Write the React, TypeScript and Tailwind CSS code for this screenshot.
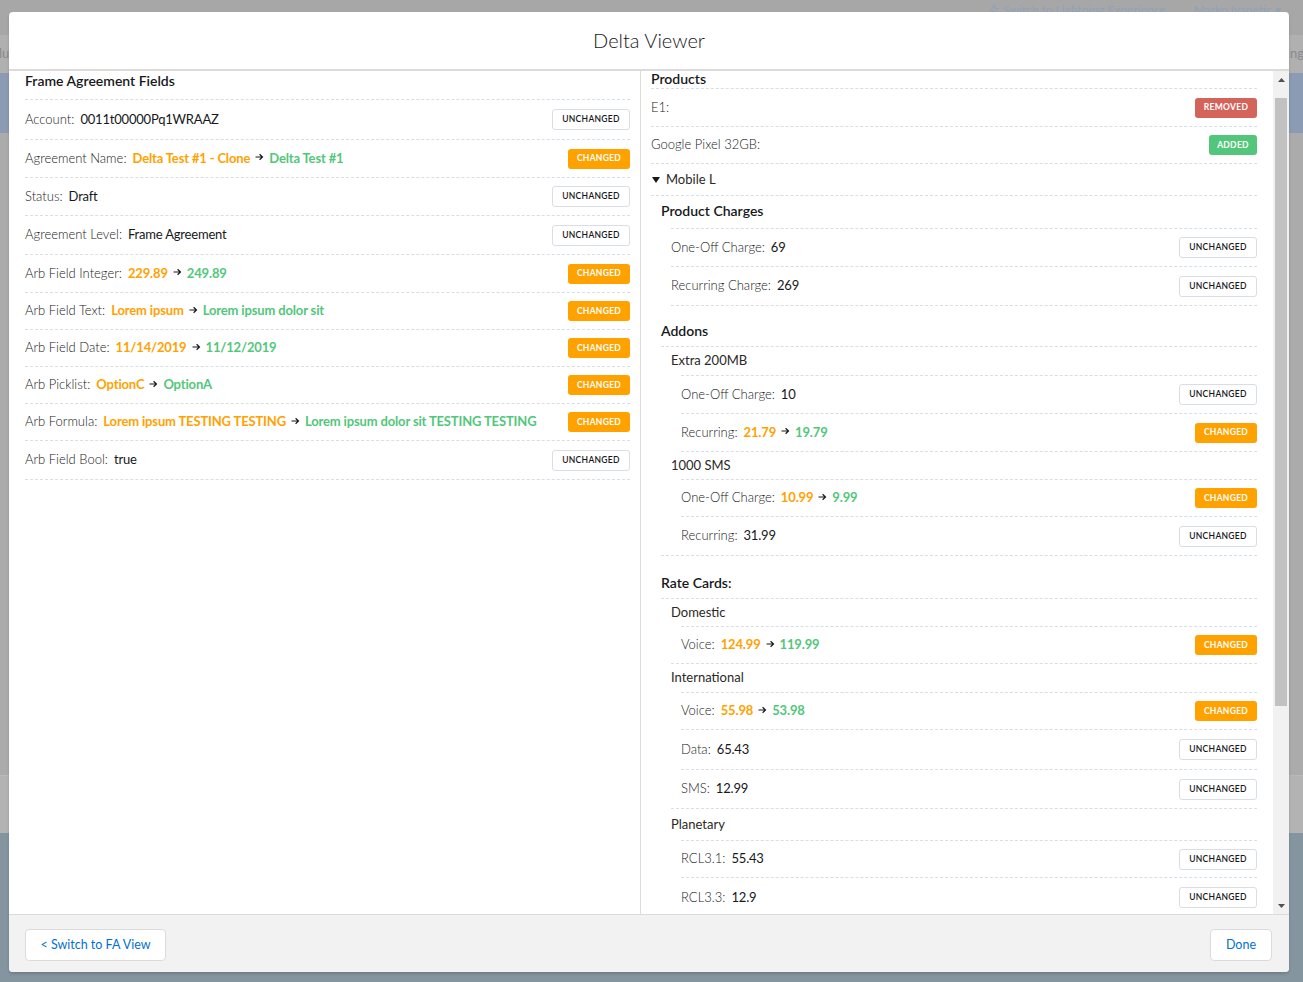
import React from "react";

type Kind = "changed" | "unchanged" | "removed" | "added";

const badgeStyles: Record<Kind, string> = {
  unchanged: "h-[21px] w-[78px] border border-[#d8dde6] bg-white text-[#16181a] font-semibold",
  changed: "h-[20px] w-[62px] bg-[#ffa200] text-white font-bold",
  removed: "h-[20px] w-[62px] bg-[#d4635a] text-white font-bold",
  added: "h-[20px] w-[48px] bg-[#52c77b] text-white font-bold",
};

const Badge = ({ kind }: { kind: Kind }) => (
  <span
    className={`inline-flex shrink-0 items-center justify-center rounded-[3px] text-[8.5px] uppercase tracking-[0.3px] ${badgeStyles[kind]}`}
  >
    {kind}
  </span>
);

const Arrow = () => (
  <svg width="9" height="8" viewBox="0 0 9 8" className="relative -top-[2px] mx-[5px] inline-block">
    <path d="M0.5 4h7M4.6 1.2 7.5 4 4.6 6.8" stroke="#16181a" strokeWidth="1.2" fill="none" />
  </svg>
);

const Field = ({ label, value, from, to }: { label: string; value?: string; from?: string; to?: string }) => (
  <span className="text-[13px] whitespace-nowrap">
    <span className="font-light text-[#222]">{label}:</span>
    {value !== undefined && <span className="ml-[6px] tracking-[-0.2px] text-[#16181a]">{value}</span>}
    {from !== undefined && (
      <>
        <span className="ml-[6px] font-bold tracking-[-0.15px] text-[#ffa200]">{from}</span>
        <Arrow />
        <span className="font-bold tracking-[-0.15px] text-[#52c77b]">{to}</span>
      </>
    )}
  </span>
);

const Row = ({
  h,
  pl = "",
  lm = "",
  mt = "",
  align = "items-center",
  badge,
  children,
}: {
  h: string;
  pl?: string;
  lm?: string;
  mt?: string;
  align?: string;
  badge?: Kind;
  children: React.ReactNode;
}) => (
  <div className={mt}>
    <div className={`flex justify-between ${align} ${h} ${pl}`}>
      <div className="flex items-center">{children}</div>
      {badge && <Badge kind={badge} />}
    </div>
    <div className={`border-t border-dashed border-[#d8dde6] ${lm}`} />
  </div>
);

const Heading = ({ children }: { children: React.ReactNode }) => (
  <span className="relative -top-[1.5px] text-[14px] font-semibold text-[#16181a]">{children}</span>
);

const Group = ({ children }: { children: React.ReactNode }) => (
  <span className="text-[13px] text-[#2b2826]">{children}</span>
);

const LeftColumn = () => (
  <div className="w-[632px] shrink-0 border-r border-[#dddbda] pl-[16px] pr-[10px]">
    <Row h="h-[28px]" align="items-start">
      <span className="leading-[19px]">
        <Heading>Frame Agreement Fields</Heading>
      </span>
    </Row>
    <Row h="h-[39px]" badge="unchanged">
      <Field label="Account" value="0011t00000Pq1WRAAZ" />
    </Row>
    <Row h="h-[37px]" badge="changed">
      <Field label="Agreement Name" from="Delta Test #1 - Clone" to="Delta Test #1" />
    </Row>
    <Row h="h-[37px]" badge="unchanged">
      <Field label="Status" value="Draft" />
    </Row>
    <Row h="h-[38px]" badge="unchanged">
      <Field label="Agreement Level" value="Frame Agreement" />
    </Row>
    <Row h="h-[37px]" badge="changed">
      <Field label="Arb Field Integer" from="229.89" to="249.89" />
    </Row>
    <Row h="h-[36px]" badge="changed">
      <Field label="Arb Field Text" from="Lorem ipsum" to="Lorem ipsum dolor sit" />
    </Row>
    <Row h="h-[36px]" badge="changed">
      <Field label="Arb Field Date" from="11/14/2019" to="11/12/2019" />
    </Row>
    <Row h="h-[36px]" badge="changed">
      <Field label="Arb Picklist" from="OptionC" to="OptionA" />
    </Row>
    <Row h="h-[36px]" badge="changed">
      <Field label="Arb Formula" from="Lorem ipsum TESTING TESTING" to="Lorem ipsum dolor sit TESTING TESTING" />
    </Row>
    <Row h="h-[38px]" badge="unchanged">
      <Field label="Arb Field Bool" value="true" />
    </Row>
  </div>
);

const Scrollbar = () => (
  <div className="flex w-[16px] shrink-0 flex-col bg-[#f1f1f1]">
    <div className="flex h-[17px] items-center justify-center">
      <svg width="7" height="4" viewBox="0 0 7 4">
        <path d="M3.5 0 7 4H0z" fill="#505050" />
      </svg>
    </div>
    <div className="mx-[2px] mt-[10px] h-[608px] bg-[#c1c1c1]" />
    <div className="flex-1" />
    <div className="flex h-[17px] items-center justify-center">
      <svg width="7" height="4" viewBox="0 0 7 4">
        <path d="M0 0h7L3.5 4z" fill="#505050" />
      </svg>
    </div>
  </div>
);

const RightColumn = () => (
  <div className="flex min-w-0 flex-1">
    <div className="min-w-0 flex-1 overflow-hidden pl-[10px] pr-[16px]">
      <Row h="h-[17px]">
        <Heading>Products</Heading>
      </Row>
      <Row h="h-[37px]" badge="removed">
        <span className="text-[13px] font-light text-[#222]">E1:</span>
      </Row>
      <Row h="h-[36px]" badge="added">
        <span className="text-[13px] font-light text-[#222]">Google Pixel 32GB:</span>
      </Row>
      <Row h="h-[31px]">
        <svg width="8" height="6" viewBox="0 0 8 6" className="ml-[1px] mr-[6px]">
          <path d="M0 0h8L4 6z" fill="#16181a" />
        </svg>
        <Group>Mobile L</Group>
      </Row>
      <Row h="h-[32px]" pl="pl-[10px]" lm="ml-[20px]">
        <Heading>Product Charges</Heading>
      </Row>
      <Row h="h-[37px]" pl="pl-[20px]" lm="ml-[20px]" badge="unchanged">
        <Field label="One-Off Charge" value="69" />
      </Row>
      <Row h="h-[38px]" pl="pl-[20px]" lm="ml-[20px]" badge="unchanged">
        <Field label="Recurring Charge" value="269" />
      </Row>
      <Row h="h-[28px]" mt="mt-[12px]" pl="pl-[10px]" lm="ml-[10px]">
        <Heading>Addons</Heading>
      </Row>
      <Row h="h-[28px]" pl="pl-[20px]" lm="ml-[30px]">
        <Group>Extra 200MB</Group>
      </Row>
      <Row h="h-[37px]" pl="pl-[30px]" lm="ml-[30px]" badge="unchanged">
        <Field label="One-Off Charge" value="10" />
      </Row>
      <Row h="h-[37px]" pl="pl-[30px]" lm="ml-[30px]" badge="changed">
        <Field label="Recurring" from="21.79" to="19.79" />
      </Row>
      <Row h="h-[27px]" pl="pl-[20px]" lm="ml-[30px]">
        <Group>1000 SMS</Group>
      </Row>
      <Row h="h-[36px]" pl="pl-[30px]" lm="ml-[30px]" badge="changed">
        <Field label="One-Off Charge" from="10.99" to="9.99" />
      </Row>
      <Row h="h-[38px]" pl="pl-[30px]" lm="ml-[10px]" badge="unchanged">
        <Field label="Recurring" value="31.99" />
      </Row>
      <Row h="h-[29px]" mt="mt-[13px]" pl="pl-[10px]" lm="ml-[10px]">
        <Heading>Rate Cards:</Heading>
      </Row>
      <Row h="h-[27px]" pl="pl-[20px]" lm="ml-[30px]">
        <Group>Domestic</Group>
      </Row>
      <Row h="h-[36px]" pl="pl-[30px]" lm="ml-[20px]" badge="changed">
        <Field label="Voice" from="124.99" to="119.99" />
      </Row>
      <Row h="h-[28px]" pl="pl-[20px]" lm="ml-[30px]">
        <Group>International</Group>
      </Row>
      <Row h="h-[36px]" pl="pl-[30px]" lm="ml-[30px]" badge="changed">
        <Field label="Voice" from="55.98" to="53.98" />
      </Row>
      <Row h="h-[39px]" pl="pl-[30px]" lm="ml-[30px]" badge="unchanged">
        <Field label="Data" value="65.43" />
      </Row>
      <Row h="h-[38px]" pl="pl-[30px]" lm="ml-[20px]" badge="unchanged">
        <Field label="SMS" value="12.99" />
      </Row>
      <Row h="h-[31px]" pl="pl-[20px]" lm="ml-[30px]">
        <Group>Planetary</Group>
      </Row>
      <Row h="h-[36px]" pl="pl-[30px]" lm="ml-[30px]" badge="unchanged">
        <Field label="RCL3.1" value="55.43" />
      </Row>
      <Row h="h-[39px]" pl="pl-[30px]" lm="ml-[30px]" badge="unchanged">
        <Field label="RCL3.3" value="12.9" />
      </Row>
    </div>
    <Scrollbar />
  </div>
);

const App = () => {
  return (
    <div className="relative h-[982px] w-[1303px] overflow-hidden font-['Lato','Liberation_Sans',sans-serif]">
      {/* page behind the overlay */}
      <div className="flex h-full flex-col">
        <div className="flex h-[35px] items-start justify-end bg-[#a7a7a7] pr-[22px] text-[12px] text-[#8fa2bb]">
          <span className="mt-[1px] flex items-center">
            <svg width="10" height="12" viewBox="0 0 10 12" className="mr-[4px]">
              <path d="M6 0.5 1 7h3.5L3.5 11.5 9 4.5H5.5z" stroke="#8fa2bb" fill="none" strokeWidth="1" />
            </svg>
            Switch to Lightning Experience
          </span>
          <span className="ml-[28px] mt-[1px]">Marko Ivanetic ▾</span>
        </div>
        <div className="flex h-[38px] items-center justify-between bg-[#b0b0b0] text-[13px] text-[#8a8a8a]">
          <span className="-ml-[1px]">lu</span>
          <span className="-mr-[1px]">ing</span>
        </div>
        <div className="h-[60px] bg-[#8a9bb3]" />
        <div className="h-[642px] bg-[#ababab]" />
        <div className="h-[58px] border-t border-[#b9b9b9] bg-[#b3b3b3]" />
        <div className="flex-1 bg-[#85959f]" />
      </div>

      {/* modal */}
      <div className="absolute left-[9px] top-[12px] flex h-[960px] w-[1280px] flex-col overflow-hidden rounded-[4px] bg-white shadow-[0_2px_3px_rgba(0,0,0,0.16)]">
        <div className="flex h-[59px] shrink-0 items-center justify-center border-b-2 border-[#dddbda]">
          <h2 className="-mt-[2px] text-[20px] font-light text-[#16181a]">Delta Viewer</h2>
        </div>
        <div className="flex min-h-0 flex-1">
          <LeftColumn />
          <RightColumn />
        </div>
        <div className="flex h-[58px] shrink-0 items-start justify-between border-t border-[#dddbda] bg-[#f3f2f2] px-[16px] pt-[14px]">
          <button className="h-[32px] w-[141px] rounded-[4px] border border-[#dddbda] bg-white text-[12.5px] text-[#0070d2]">
            &lt; Switch to FA View
          </button>
          <button className="mr-[1px] h-[32px] w-[62px] rounded-[4px] border border-[#dddbda] bg-white text-[12.5px] text-[#0070d2]">
            Done
          </button>
        </div>
      </div>
    </div>
  );
};

export default App;
